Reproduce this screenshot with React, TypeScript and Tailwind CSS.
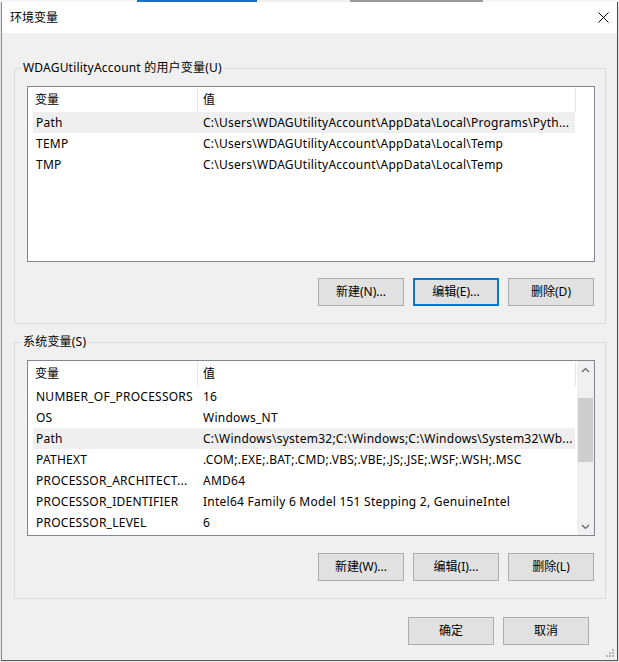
import React from 'react'

const font = "font-['Noto_Sans','Noto_Sans_CJK_SC',sans-serif]"

interface EnvVar {
  name: string
  value: string
  selected?: boolean
}

const userVars: EnvVar[] = [
  { name: 'Path', value: 'C:\\Users\\WDAGUtilityAccount\\AppData\\Local\\Programs\\Pyth...', selected: true },
  { name: 'TEMP', value: 'C:\\Users\\WDAGUtilityAccount\\AppData\\Local\\Temp' },
  { name: 'TMP', value: 'C:\\Users\\WDAGUtilityAccount\\AppData\\Local\\Temp' },
]

const systemVars: EnvVar[] = [
  { name: 'NUMBER_OF_PROCESSORS', value: '16' },
  { name: 'OS', value: 'Windows_NT' },
  { name: 'Path', value: 'C:\\Windows\\system32;C:\\Windows;C:\\Windows\\System32\\Wb...', selected: true },
  { name: 'PATHEXT', value: '.COM;.EXE;.BAT;.CMD;.VBS;.VBE;.JS;.JSE;.WSF;.WSH;.MSC' },
  { name: 'PROCESSOR_ARCHITECT...', value: 'AMD64' },
  { name: 'PROCESSOR_IDENTIFIER', value: 'Intel64 Family 6 Model 151 Stepping 2, GenuineIntel' },
  { name: 'PROCESSOR_LEVEL', value: '6' },
]

function Button({ label, focused }: { label: string; focused?: boolean }) {
  return (
    <div
      className={
        focused
          ? 'flex h-[28px] w-[86px] items-center justify-center border-2 border-[#0078d7] bg-[#e1e1e1] text-[12px] leading-[16px] text-black'
          : 'flex h-[28px] w-[86px] items-center justify-center border border-[#adadad] bg-[#e1e1e1] text-[12px] leading-[16px] text-black'
      }
    >
      {label}
    </div>
  )
}

function Chevron({ up }: { up?: boolean }) {
  return (
    <svg width="9" height="6" viewBox="0 0 9 6" fill="none">
      <path
        d={up ? 'M1 5 L4.5 1.5 L8 5' : 'M1 1 L4.5 4.5 L8 1'}
        stroke="#606060"
        strokeWidth="1.2"
      />
    </svg>
  )
}

function Scrollbar() {
  return (
    <div className="flex w-[17px] flex-col bg-[#f0f0f0]">
      <div className="flex h-[17px] items-center justify-center">
        <Chevron up />
      </div>
      <div className="flex-1 px-[1px] pt-[20px]">
        <div className="h-[64px] bg-[#cdcdcd]" />
      </div>
      <div className="flex h-[17px] items-center justify-center">
        <Chevron />
      </div>
    </div>
  )
}

function ListView({ rows, scroll }: { rows: EnvVar[]; scroll?: boolean }) {
  return (
    <div className="flex h-[176px] w-[568px] border border-[#828790] bg-white">
      <div className="flex w-[549px] flex-col">
        {/* header */}
        <div className="flex h-[25px] items-center pt-[1px] text-[12px] leading-[16px]">
          <div className="flex h-full w-[170px] items-center border-r border-[#e5e5e5] pl-[7px]">变量</div>
          <div className="flex h-full w-[378px] items-center border-r border-[#e5e5e5] pl-[5px]">值</div>
        </div>
        {rows.map((r) => (
          <div
            key={r.name + r.value}
            className={
              r.selected
                ? 'ml-[5px] flex h-[21px] w-[542px] items-center bg-[#efefef] pt-[1px] text-[12px] leading-[20px] tracking-[0.25px]'
                : 'ml-[5px] flex h-[21px] w-[542px] items-center pt-[1px] text-[12px] leading-[20px] tracking-[0.25px]'
            }
          >
            <div className="w-[164px] overflow-hidden whitespace-nowrap pl-[3px]">{r.name}</div>
            <div className="w-[378px] overflow-hidden whitespace-nowrap pl-[6px]">{r.value}</div>
          </div>
        ))}
      </div>
      {scroll && <div className="flex flex-1 justify-end"><Scrollbar /></div>}
    </div>
  )
}

function GroupBox({
  label,
  rows,
  scroll,
  buttons,
  height,
  buttonGap,
}: {
  label: string
  rows: EnvVar[]
  scroll?: boolean
  buttons: { label: string; focused?: boolean }[]
  height: string
  buttonGap: string
}) {
  return (
    <div className={`flex w-[592px] flex-col border border-[#dcdcdc] ${height}`}>
      <span className="-mt-[9px] ml-[6px] self-start bg-[#f0f0f0] px-[2px] text-[12px] leading-[16px] tracking-[0.2px] text-black">
        {label}
      </span>
      <div className="ml-[12px] mt-[10px]">
        <ListView rows={rows} scroll={scroll} />
      </div>
      <div className={`ml-[303px] flex gap-[9px] ${buttonGap}`}>
        {buttons.map((b) => (
          <Button key={b.label} label={b.label} focused={b.focused} />
        ))}
      </div>
    </div>
  )
}

function ResizeGrip() {
  return (
    <svg className="absolute bottom-[2px] right-[2px]" width="10" height="10" viewBox="0 0 10 10">
      <rect x="7" y="1" width="2" height="2" fill="#b4b4b4" />
      <rect x="4" y="4" width="2" height="2" fill="#b4b4b4" />
      <rect x="7" y="4" width="2" height="2" fill="#b4b4b4" />
      <rect x="1" y="7" width="2" height="2" fill="#b4b4b4" />
      <rect x="4" y="7" width="2" height="2" fill="#b4b4b4" />
      <rect x="7" y="7" width="2" height="2" fill="#b4b4b4" />
    </svg>
  )
}

export default function App() {
  return (
    <div className={`h-[662px] w-[619px] overflow-hidden bg-[#e6e6e6] text-black ${font}`}>
      {/* strip of the desktop behind the dialog */}
      <div className="flex h-[2px]">
        <div className="w-[137px] bg-[#f4f4f4]" />
        <div className="w-[120px] bg-[#1e6fc4]" />
        <div className="w-[93px] bg-[#f0f0f0]" />
        <div className="w-[133px] bg-[#9a9a9a]" />
        <div className="flex-1 bg-[#f4f4f4]" />
      </div>

      <div className="ml-[1px] flex">
        <div className="relative flex h-[659px] w-[617px] flex-col border-b border-l border-r border-b-[#5a5a5a] border-l-[#8a8a8a] border-r-[#3c4b5c] bg-[#f0f0f0]">
          {/* title bar */}
          <div className="flex h-[31px] items-center justify-between bg-white pl-[8px] pr-[8px]">
            <span className="text-[12px] leading-[16px]">环境变量</span>
            <svg width="11" height="11" viewBox="0 0 11 11">
              <path d="M0.5 0.5 L10.5 10.5 M10.5 0.5 L0.5 10.5" stroke="#000" strokeWidth="1" />
            </svg>
          </div>

          <div className="ml-[12px] mt-[35px]">
            <GroupBox
              label="WDAGUtilityAccount 的用户变量(U)"
              rows={userVars}
              height="h-[256px]"
              buttonGap="mt-[16px]"
              buttons={[{ label: '新建(N)...' }, { label: '编辑(E)...', focused: true }, { label: '删除(D)' }]}
            />
          </div>

          <div className="ml-[12px] mt-[18px]">
            <GroupBox
              label="系统变量(S)"
              rows={systemVars}
              scroll
              height="h-[257px]"
              buttonGap="mt-[17px]"
              buttons={[{ label: '新建(W)...' }, { label: '编辑(I)...' }, { label: '删除(L)' }]}
            />
          </div>

          <div className="mr-[28px] mt-[18px] flex justify-end gap-[9px]">
            <Button label="确定" />
            <Button label="取消" />
          </div>

          <ResizeGrip />
        </div>
      </div>
    </div>
  )
}
